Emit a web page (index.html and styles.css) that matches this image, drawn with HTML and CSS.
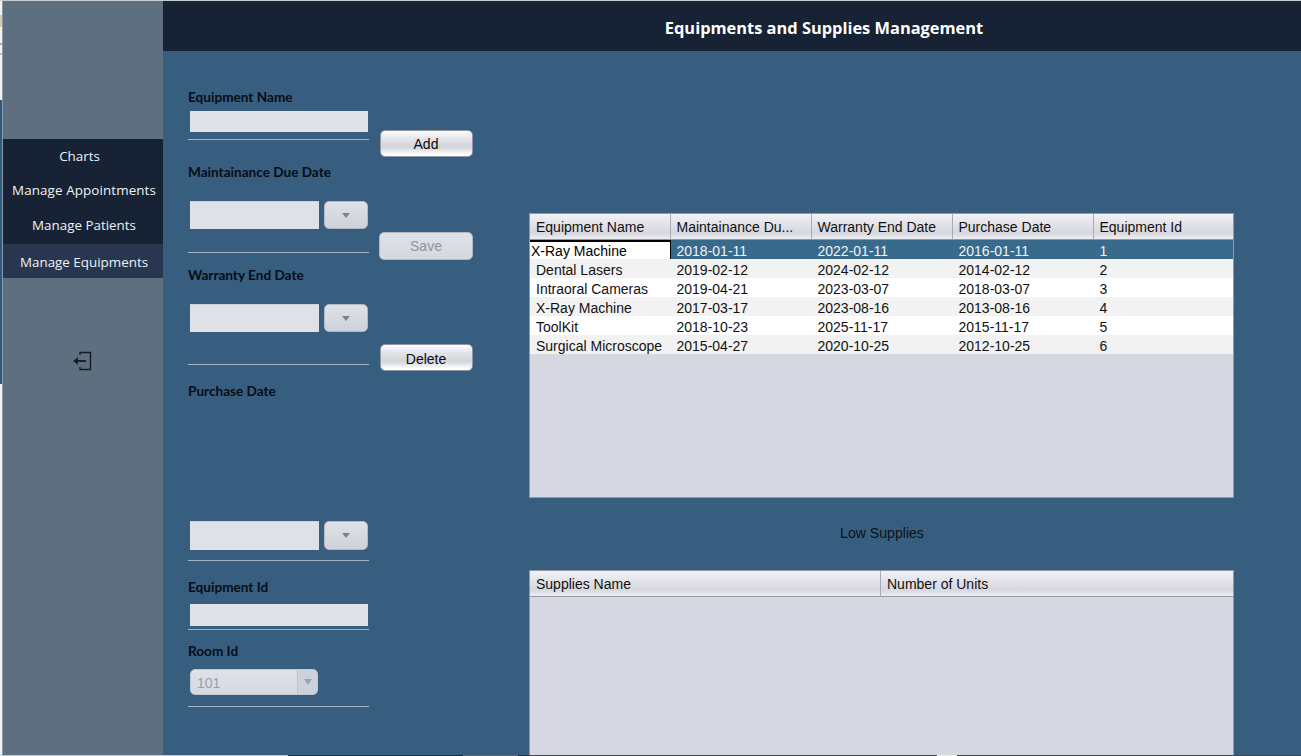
FILE: index.html
```html
<!DOCTYPE html>
<html lang="en">
<head>
<meta charset="utf-8">
<title>Equipments and Supplies Management</title>
<link rel="stylesheet" href="styles.css">
</head>
<body>
<div class="window">
  <div class="edge"></div>
  <aside class="sidebar">
    <nav class="nav">
      <a class="nav-item nav-charts">Charts</a>
      <a class="nav-item nav-appts">Manage Appointments</a>
      <a class="nav-item nav-patients">Manage Patients</a>
      <a class="nav-item nav-equip active">Manage Equipments</a>
    </nav>
    <div class="logout">
      <svg width="22" height="22" viewBox="0 0 22 22" fill="none" stroke="#10192a">
        <path d="M8 5V2.5h10.5v17H8V17" stroke-width="1.3"/>
        <path d="M5 11h9" stroke-width="1.8"/>
        <path d="M1.5 11L5.5 7.8v6.4z" fill="#10192a" stroke-width=".6"/>
      </svg>
    </div>
  </aside>
  <main class="main">
    <header class="header">Equipments and Supplies Management</header>
    <div class="content">
      <section class="form">
        <div class="field f-name">
          <label class="label">Equipment Name</label>
          <div class="input"></div>
        </div>
        <div class="field f-due">
          <label class="label">Maintainance Due Date</label>
          <div class="date"><div class="input"></div><button class="date-btn"><span class="arrow"></span></button></div>
        </div>
        <div class="field f-warranty">
          <label class="label">Warranty End Date</label>
          <div class="date"><div class="input"></div><button class="date-btn"><span class="arrow"></span></button></div>
        </div>
        <div class="field f-purchase">
          <label class="label">Purchase Date</label>
          <div class="date"><div class="input"></div><button class="date-btn"><span class="arrow"></span></button></div>
        </div>
        <div class="field f-id">
          <label class="label">Equipment Id</label>
          <div class="input"></div>
        </div>
        <div class="field f-room">
          <label class="label">Room Id</label>
          <div class="combo"><span class="combo-value">101</span><span class="combo-btn"><span class="arrow arrow-light"></span></span></div>
        </div>
      </section>
      <section class="actions">
        <button class="btn btn-add">Add</button>
        <button class="btn btn-save" disabled>Save</button>
        <button class="btn btn-delete">Delete</button>
      </section>
      <section class="tables">
        <div class="table-box equip-box">
          <table class="grid">
            <thead>
              <tr><th>Equipment Name</th><th>Maintainance Du...</th><th>Warranty End Date</th><th>Purchase Date</th><th>Equipment Id</th></tr>
            </thead>
            <tbody>
              <tr class="selected"><td class="focus">X-Ray Machine</td><td>2018-01-11</td><td>2022-01-11</td><td>2016-01-11</td><td>1</td></tr>
              <tr class="alt"><td>Dental Lasers</td><td>2019-02-12</td><td>2024-02-12</td><td>2014-02-12</td><td>2</td></tr>
              <tr><td>Intraoral Cameras</td><td>2019-04-21</td><td>2023-03-07</td><td>2018-03-07</td><td>3</td></tr>
              <tr class="alt"><td>X-Ray Machine</td><td>2017-03-17</td><td>2023-08-16</td><td>2013-08-16</td><td>4</td></tr>
              <tr><td>ToolKit</td><td>2018-10-23</td><td>2025-11-17</td><td>2015-11-17</td><td>5</td></tr>
              <tr class="alt"><td>Surgical Microscope</td><td>2015-04-27</td><td>2020-10-25</td><td>2012-10-25</td><td>6</td></tr>
            </tbody>
          </table>
        </div>
        <div class="low">Low Supplies</div>
        <div class="table-box supply-box">
          <table class="grid">
            <thead><tr><th>Supplies Name</th><th>Number of Units</th></tr></thead>
          </table>
        </div>
      </section>
    </div>
  </main>
</div>
</body>
</html>
```
FILE: styles.css
```css
* { box-sizing: border-box; }
html, body { margin: 0; height: 100%; overflow: hidden; background: #fff; }
.window {
  display: flex;
  width: 1301px;
  height: 756px;
  padding-top: 1px;
  padding-bottom: 1px;
  background-color: #c9cdd2;
  background-image: linear-gradient(90deg, #c4c8cc 0, #c4c8cc 288px, #17303f 288px, #17303f 463px, #5a6a76 463px, #5a6a76 518px, #17303f 518px, #17303f 528px, #43464b 528px, #43464b 937px, #eef0f3 937px, #eef0f3 957px, #43464b 957px);
  background-size: 100% 1px;
  background-position: left bottom;
  background-repeat: no-repeat;
}
.edge {
  width: 3px;
  border-right: 1px solid #8d9aa6;
  background: linear-gradient(#f2f2f2 0, #f2f2f2 14px, #d9c8a8 14px, #d9c8a8 26px, #f2f2f2 26px, #f2f2f2 42px, #a9a9a9 42px, #a9a9a9 44px, #f2f2f2 44px, #f2f2f2 52px, #c0c0c0 52px, #c0c0c0 54px, #f2f2f2 54px, #f2f2f2 99px, #2c5a80 99px, #2c5a80 383px, #f2f2f2 383px);
}
.sidebar { width: 160px; background: #5e707f; display: flex; flex-direction: column; padding-top: 138px; }
.nav { display: flex; flex-direction: column; background: #172335; height: 139px; }
.nav-item {
  display: block;
  font: 13.4px/20px "Open Sans", sans-serif;
  color: #eef2f6;
  text-align: center;
  white-space: nowrap;
  padding-left: 2px;
}
.nav-charts { padding: 7px 7px 0 0; height: 33px; }
.nav-appts { padding-top: 8px; height: 35px; letter-spacing: .1px; }
.nav-patients { padding-top: 8px; height: 37px; }
.nav-equip { padding-top: 8px; height: 34px; }
.active { background: #28374f; }
.logout { margin-top: 72px; padding-left: 69px; height: 22px; line-height: 0; }

.main { flex: 1; display: flex; flex-direction: column; min-width: 0; background: #375e7f; overflow: hidden; }
.header {
  height: 50px;
  flex: none;
  background: #172335;
  color: #fff;
  font: 700 16.4px/54px "Open Sans", sans-serif;
  text-align: center;
  padding-left: 184px;
}
.content { flex: 1; display: flex; padding-left: 25px; min-height: 0; }

.form { width: 181px; flex: none; padding-top: 38px; }
.label {
  display: block;
  font: 700 13.6px/16px Lato, sans-serif;
  color: #060d18;
  white-space: nowrap;
}
.field { border-bottom: 1px solid #a7b2bd; }
.input { background: #dfe1e7; margin-left: 2px; width: 178px; height: 21px; }
.date { display: flex; gap: 5px; margin-left: 2px; width: 178px; }
.date .input { margin: 0; width: 129px; height: 100%; box-shadow: inset 0 1px #cfd2d9; }
.date-btn {
  width: 44px;
  height: 100%;
  padding: 0;
  border: 1px solid #b3b9c3;
  border-radius: 5px;
  background: linear-gradient(#dfe1e7, #ced1d9);
  display: flex;
  align-items: center;
  justify-content: center;
}
.arrow {
  width: 0;
  height: 0;
  border-left: 4px solid transparent;
  border-right: 4px solid transparent;
  border-top: 5px solid #7c8288;
}
.arrow-light { border-top-color: #9aa3ad; border-top-width: 6px; }

.f-name { padding-bottom: 7px; }
.f-name .label { margin-bottom: 6px; }
.f-due { margin-top: 24px; padding-bottom: 23px; }
.f-due .label, .f-warranty .label { margin-bottom: 21px; }
.f-due .date, .f-warranty .date { height: 28px; }
.f-warranty { margin-top: 14px; padding-bottom: 32px; }
.f-purchase { margin-top: 18px; padding-bottom: 10px; }
.f-purchase .label { margin-bottom: 122px; }
.f-purchase .date { height: 29px; }
.f-id { margin-top: 18px; padding-bottom: 3px; }
.f-id .label { margin-bottom: 9px; }
.f-id .input { height: 22px; }
.f-room { margin-top: 13px; padding-bottom: 11px; }
.f-room .label { margin-bottom: 10px; }
.combo {
  display: flex;
  margin-left: 2px;
  width: 128px;
  height: 26px;
  border: 1px solid #c3c8d0;
  border-radius: 5px;
  background: linear-gradient(#dfe1e7, #d6d9e0);
  overflow: hidden;
}
.combo-value { flex: 1; padding-left: 6px; font: 14px/26px "Liberation Sans", sans-serif; color: #9a9ea5; }
.combo-btn { width: 20px; background: #cdd1db; border-left: 1px solid #bfc4ce; display: flex; align-items: center; justify-content: center; }

.actions { width: 94px; flex: none; margin-left: 10px; padding-top: 79px; display: flex; flex-direction: column; align-items: center; }
.btn {
  width: 93px;
  height: 27px;
  padding: 1px 0 0;
  border: 1px solid #8e97a3;
  border-radius: 5px;
  background: linear-gradient(#fdfdfe 0, #e4e5ea 30%, #d2d4db 65%, #fff 95%);
  font: 14px/25px "Liberation Sans", sans-serif;
  color: #0b0b0b;
  flex: none;
}
.btn-save {
  margin-top: 75px;
  width: 94px;
  height: 28px;
  padding: 0;
  background: linear-gradient(#dfe1e7, #d5d8df);
  border-color: #b3b9c3;
  color: #8f949b;
}
.btn-delete { margin-top: 84px; padding-top: 2px; }

.tables { width: 705px; flex: none; margin-left: 56px; padding-top: 162px; display: flex; flex-direction: column; }
.table-box { border: 1px solid #8f9aa6; background: #d5d8e1; flex: none; }
.equip-box { height: 285px; }
.low { flex: none; height: 72px; padding-left: 1px; font: 14.1px/70px "Liberation Sans", sans-serif; color: #0d1117; text-align: center; }
.supply-box { height: 200px; }
.grid { width: 100%; border-collapse: separate; border-spacing: 0; table-layout: fixed; font: 14px/18px "Liberation Sans", sans-serif; color: #111; }
.grid th {
  height: 26px;
  padding: 0 0 0 6px;
  text-align: left;
  font-weight: 400;
  white-space: nowrap;
  background: linear-gradient(#f3f3f6 0, #e2e3e9 40%, #d7d8df 75%, #eceef2 100%);
  border-right: 1px solid #a6abb5;
  border-bottom: 1px solid #8f9aa6;
}
.grid th:last-child { border-right: 0; }
.grid td { height: 19px; padding: 3px 0 0 6px; line-height: 16px; white-space: nowrap; background: #fff; }
.equip-box th:not(:first-child), .equip-box td:not(:first-child) { padding-left: 5.5px; }
.alt td { background: #f2f2f2; }
.selected td { background: #386a8c; color: #f1f4f7; }
.selected .focus { background: #fff; color: #000; padding-left: 1px; box-shadow: inset 0 2px #000, inset -1px 0 #000; }
.equip-box .grid th:nth-child(-n+4) { width: 141px; }
.supply-box .grid th:first-child { width: 351px; }
```
